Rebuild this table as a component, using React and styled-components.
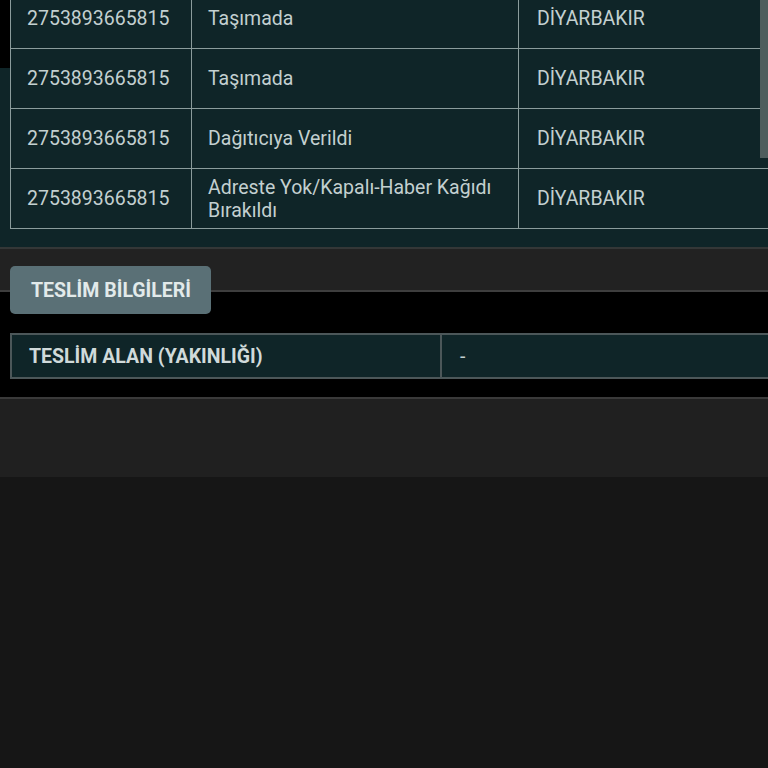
import React from "react";
import styled, { createGlobalStyle } from "styled-components";

const Global = createGlobalStyle`
  html, body { margin: 0; padding: 0; background: #161616; }
  body { font-family: Roboto, "Noto Sans", "Liberation Sans", sans-serif; }
  * { box-sizing: border-box; }
`;

const Page = styled.div`
  width: 768px;
  min-height: 768px;
  background: #161616;
  overflow: hidden;
`;

const ResultPanel = styled.section`
  position: relative;
  background-color: #0f2528;
  background-image: linear-gradient(#000, #000);
  background-size: 10px 68px;
  background-repeat: no-repeat;
  padding: 0 0 18px 10px;
  overflow: hidden;
  border-bottom: 2px solid #343737;
`;

const MoveTable = styled.table`
  border-collapse: collapse;
  width: 800px;
  margin-top: -12px;
  table-layout: fixed;
  color: #c3d0d0;
  font-size: 19.5px;
`;

const Cell = styled.td`
  border: 1px solid #8b9c9c;
  height: 60px;
  padding: 0 ${(p) => (p.$last ? "18px" : "16px")};
  vertical-align: middle;
  line-height: 23px;
  width: ${(p) => p.$w || "auto"};
`;

const Scrollbar = styled.div`
  position: absolute;
  top: 0;
  right: 0;
  width: 8px;
  height: 158px;
  background: #4e5d5d;
`;

const TabStrip = styled.div`
  background: linear-gradient(#222222 0 41px, #3e3e3e 41px 43px, #000 43px);
  padding: 17px 0 19px 10px;
`;

const TabButton = styled.button`
  display: block;
  height: 48px;
  width: 201px;
  border: none;
  border-radius: 5px;
  background: #5a7076;
  color: #e2eaea;
  font-family: Roboto, "Noto Sans", sans-serif;
  font-weight: 700;
  font-size: 19.5px;
  text-align: left;
  padding: 0 0 0 21px;
`;

const InfoArea = styled.div`
  background: #000;
  padding: 0 0 18px 10px;
  border-bottom: 2px solid #3a3a3a;
`;

const InfoTable = styled.table`
  border-collapse: collapse;
  width: 800px;
  table-layout: fixed;
  background: #0f2528;
`;

const InfoCell = styled.td`
  border: 2px solid #4c5759;
  height: 44px;
  padding: 0 ${(p) => (p.$label ? "17px" : "18px")};
  width: ${(p) => (p.$label ? "430px" : "auto")};
  color: ${(p) => (p.$label ? "#d0dada" : "#c3d0d0")};
  font-weight: ${(p) => (p.$label ? 700 : 400)};
  font-size: 19.5px;
  vertical-align: middle;
`;

const Footer = styled.div`
  height: 78px;
  background: #202020;
`;

const rows = [
  ["2753893665815", "Taşımada", "DİYARBAKIR"],
  ["2753893665815", "Taşımada", "DİYARBAKIR"],
  ["2753893665815", "Dağıtıcıya Verildi", "DİYARBAKIR"],
  ["2753893665815", "Adreste Yok/Kapalı-Haber Kağıdı Bırakıldı", "DİYARBAKIR"],
];

export default function App() {
  return (
    <Page>
      <Global />
      <ResultPanel>
        <MoveTable>
          <tbody>
            {rows.map((r, i) => (
              <tr key={i}>
                <Cell $w="181px">{r[0]}</Cell>
                <Cell $w="327px">{r[1]}</Cell>
                <Cell $last>{r[2]}</Cell>
              </tr>
            ))}
          </tbody>
        </MoveTable>
        <Scrollbar />
      </ResultPanel>
      <TabStrip>
        <TabButton>TESLİM BİLGİLERİ</TabButton>
      </TabStrip>
      <InfoArea>
        <InfoTable>
          <tbody>
            <tr>
              <InfoCell $label>TESLİM ALAN (YAKINLIĞI)</InfoCell>
              <InfoCell>-</InfoCell>
            </tr>
          </tbody>
        </InfoTable>
      </InfoArea>
      <Footer />
    </Page>
  );
}
